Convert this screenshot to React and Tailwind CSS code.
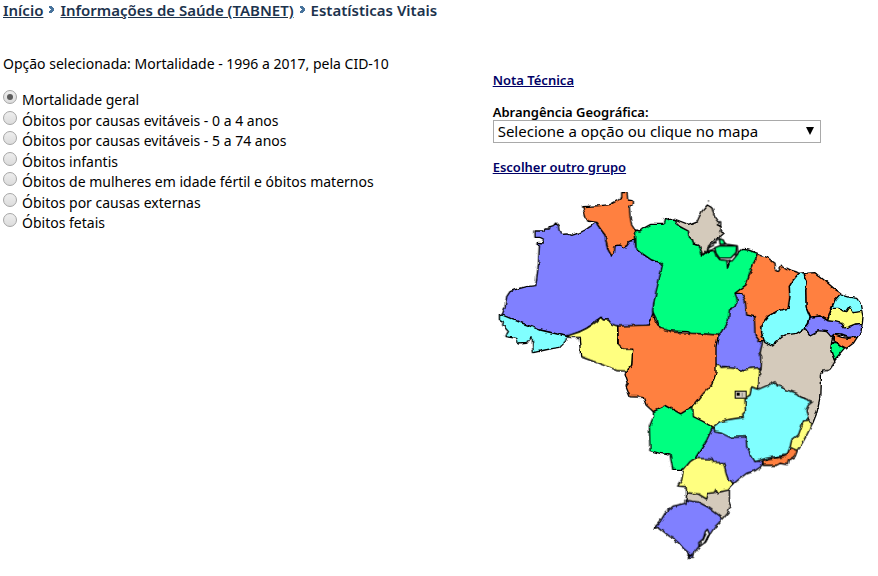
import { useState } from "react";

const GROUPS = [
  "Mortalidade geral",
  "Óbitos por causas evitáveis - 0 a 4 anos",
  "Óbitos por causas evitáveis - 5 a 74 anos",
  "Óbitos infantis",
  "Óbitos de mulheres em idade fértil e óbitos maternos",
  "Óbitos por causas externas",
  "Óbitos fetais",
];

const BLUE = "#8080ff";
const ORANGE = "#ff8040";
const GREEN = "#00ff80";
const SAND = "#d4cabb";
const YELLOW = "#ffff80";
const CYAN = "#80ffff";

// Each state is an outline relative to the origin of its region of the map.
// Earlier states reach under later ones, so a shared border is drawn once.
const NORTHWEST = [0, 0];
const NORTH = [390, 0];
const NORTHEAST = [705, 165];
const WEST = [210, 375];
const CENTER = [570, 465];
const SOUTH = [450, 735];

const STATES = [
  { id: "BA", fill: SAND, at: CENTER, points: "238,0 280,5 320,-30 375,-42 420,-38 460,-15 455,5 453,30 460,50 465,65 450,88 428,90 428,98 421,105 421,125 419,180 410,220 398,250 385,250 370,225 370,205 375,190 375,176 345,168 318,158 300,150 285,135 265,145 240,150 230,143 232,80" },
  { id: "TO", fill: BLUE, at: NORTHEAST, points: "28,150 60,150 75,180 75,215 100,225 100,285 114,303 108,325 105,340 110,350 108,390 85,400 70,392 55,395 40,387 10,388 0,380 -32,378 -35,330 -33,290 -18,275 -10,258 3,235 6,205 25,195 30,185 20,165" },
  { id: "AM", fill: BLUE, at: NORTHWEST, points: "135,138 160,138 165,132 178,132 180,125 190,122 197,114 205,122 207,135 213,148 235,147 245,151 270,143 285,135 300,125 318,112 330,130 345,150 352,190 365,213 375,182 390,180 400,188 410,182 420,168 436,165 438,190 460,208 485,225 512,232 517,240 510,290 500,320 490,365 488,390 482,420 440,424 380,424 365,420 355,405 338,405 333,398 320,405 305,420 290,430 270,440 235,455 150,435 90,412 36,390 45,365 50,335 60,320 75,314 90,310 110,305 137,302 140,280 145,240 148,180 141,178 142,172 158,174 160,162 150,157 135,157" },
  { id: "RR", fill: ORANGE, at: NORTHWEST, points: "278,65 330,62 360,59 385,45 395,38 395,23 411,23 413,45 427,47 427,60 418,64 420,95 425,120 436,137 436,165 420,168 410,182 400,188 390,180 375,182 373,205 365,213 355,195 348,170 345,150 330,130 318,112 290,108" },
  { id: "AC", fill: CYAN, at: NORTHWEST, points: "28,392 36,390 90,412 150,435 233,455 230,465 210,487 190,490 165,495 130,503 126,455 110,475 85,477 80,460 45,455 55,440 38,420 40,410 28,403" },
  { id: "PA", fill: GREEN, at: NORTH, points: "46,135 60,138 70,130 92,118 130,118 133,100 145,104 163,102 168,115 180,125 205,138 208,155 218,165 220,177 238,182 248,210 262,200 285,195 292,215 300,224 320,222 323,248 330,225 345,210 365,193 385,195 413,205 395,250 378,300 345,325 352,345 345,365 328,375 325,405 310,430 297,452 270,448 210,445 205,440 130,437 112,425 108,400 100,385 98,375 108,320 118,280 127,240 120,232 95,225 70,208 48,190" },
  { id: "AP", fill: SAND, at: NORTH, points: "163,102 205,118 232,108 245,80 262,60 275,68 285,95 298,112 292,120 303,125 303,140 312,145 300,155 285,165 270,178 262,195 248,210 238,182 220,177 218,165 208,155 205,138 180,125 168,115" },
  { id: "GO", fill: YELLOW, at: CENTER, points: "104,72 120,74 123,82 145,80 165,82 190,93 210,85 240,83 235,145 222,150 205,190 200,240 150,248 120,255 100,270 80,260 50,245 34,230 34,195 55,160 85,130 100,100" },
  { id: "SP", fill: BLUE, at: CENTER, points: "88,266 110,268 130,275 150,284 206,282 210,320 220,340 228,362 247,366 248,372 240,382 225,392 200,400 180,415 158,434 135,425 130,390 125,375 90,370 40,362 70,315" },
  { id: "MG", fill: CYAN, at: CENTER, points: "215,140 235,148 265,135 285,125 292,138 305,140 320,150 350,160 360,170 398,185 385,195 378,210 385,240 370,245 360,280 340,300 330,325 320,345 260,355 225,365 210,340 200,320 198,290 150,292 125,280 104,276 100,260 120,245 150,238 190,232 188,222 196,215 195,175 210,165" },
  { id: "ES", fill: YELLOW, at: CENTER, points: "370,243 388,240 396,252 380,285 365,312 350,332 330,322 335,300 355,285" },
  { id: "RJ", fill: ORANGE, at: CENTER, points: "330,322 352,332 345,350 325,362 322,374 300,370 290,376 250,376 248,362 285,355 320,348" },
  { id: "MA", fill: ORANGE, at: NORTHEAST, points: "98,42 130,55 150,70 152,92 160,95 170,78 190,88 215,96 222,100 205,120 193,140 195,170 190,205 160,212 130,228 112,250 110,280 120,305 105,305 90,285 88,230 65,225 60,180 50,160 30,160 63,135 80,85" },
  { id: "CE", fill: ORANGE, at: NORTHEAST, points: "237,100 270,98 300,122 330,148 350,160 330,180 320,200 308,240 285,228 258,232 250,215 243,200 242,150 247,125" },
  { id: "PI", fill: CYAN, at: NORTHEAST, points: "222,100 237,98 240,115 247,125 242,150 243,200 255,230 250,250 240,265 215,280 180,285 160,300 140,318 120,308 110,280 112,250 130,228 160,212 190,205 195,170 193,140 205,120" },
  { id: "PE", fill: BLUE, at: NORTHEAST, points: "255,232 285,228 308,242 345,245 360,262 390,252 412,248 408,275 398,290 370,292 350,285 330,283 318,290 305,275 280,272 255,285 240,265 252,250" },
  { id: "PB", fill: YELLOW, at: NORTHEAST, points: "320,205 340,205 350,212 365,215 375,200 385,218 410,212 414,230 412,250 390,252 360,264 350,250 330,245 308,242" },
  { id: "RN", fill: CYAN, at: NORTHEAST, points: "345,163 375,172 395,175 405,188 410,214 385,218 375,200 365,214 350,210 340,205 320,205 330,180" },
  { id: "AL", fill: ORANGE, at: NORTHEAST, points: "325,283 350,292 370,295 398,290 385,310 365,325 345,315 325,303" },
  { id: "SE", fill: GREEN, at: NORTHEAST, points: "320,308 335,308 358,325 345,340 328,360 322,345 317,330" },
  { id: "MT", fill: ORANGE, at: WEST, points: "173,48 240,46 268,45 275,20 280,10 285,30 300,55 340,66 475,75 468,110 468,190 455,225 430,250 410,275 398,290 362,312 318,287 280,305 258,285 250,262 210,260 198,230 205,220 195,190 215,165 218,118 190,118 175,105" },
  { id: "RO", fill: YELLOW, at: WEST, points: "20,78 60,65 80,55 95,45 110,35 122,22 130,30 145,30 155,42 173,48 173,100 190,118 218,118 215,165 200,183 170,182 130,165 62,140 58,82 30,82" },
  { id: "MS", fill: GREEN, at: WEST, points: "280,305 318,287 362,312 398,290 400,320 430,335 458,352 440,390 405,445 370,478 338,478 330,435 300,430 270,422 268,350 280,320" },
  { id: "SC", fill: SAND, at: SOUTH, points: "140,180 175,185 198,200 205,184 230,180 268,178 268,220 273,228 265,245 243,270 230,262 205,240 175,226 138,218" },
  { id: "PR", fill: YELLOW, at: SOUTH, points: "165,85 215,87 220,97 250,98 258,130 265,150 282,160 265,180 230,188 228,178 222,188 205,190 200,207 175,192 140,188 138,170 113,168 125,150 130,120 150,95" },
  { id: "RS", fill: BLUE, at: SOUTH, points: "135,210 175,216 205,232 240,258 240,275 225,290 205,320 180,345 165,365 160,385 145,385 150,372 130,355 115,338 100,325 90,320 75,308 55,292 40,296 60,275 75,250 100,228 135,220" },
];

function BrazilMap() {
  return (
    <svg viewBox="9 0 1119 1131" className="block w-[373px] max-w-full overflow-visible" role="img" aria-label="Mapa do Brasil">
      <defs>
        <filter id="coast" x="-2%" y="-2%" width="104%" height="104%">
          <feTurbulence type="fractalNoise" baseFrequency="0.05" numOctaves="2" seed="4" result="noise" />
          <feDisplacementMap in="SourceGraphic" in2="noise" scale="11" xChannelSelector="R" yChannelSelector="G" />
        </filter>
      </defs>
      <g filter="url(#coast)" stroke="#000" strokeWidth="4" strokeLinejoin="round">
        {STATES.map(({ id, fill, at, points }) => (
          <polygon key={id} points={points} fill={fill} transform={`translate(${at[0]} ${at[1]})`} />
        ))}
      </g>
      <g stroke="#000" strokeWidth="4" strokeLinejoin="round">
        <g transform="translate(390 0)">
          <path d="M262 196 272 178 298 160 320 178 352 182 354 206 336 228 300 224 284 198Z" fill="#fff" />
          <path d="M284 188 300 182 350 183 348 203 332 219 298 219 288 205Z" fill={GREEN} />
          <path d="M298 161 310 165 315 178 300 178Z" fill={GREEN} />
          <path d="M264 190 282 180M268 198 284 190M276 176 290 172M322 248 330 224M352 206 344 212" fill="none" />
          <path d="M264 48h3M294 110h8v12h-7" fill="none" />
        </g>
        <g transform="translate(450 735)">
          <path d="M202 298 208 312 198 335 178 350 176 338 190 326 196 304Z" fill="#fff" />
          <path d="M198 310 188 332M205 316 193 340M184 334 181 346M142 374 158 378M144 384 158 370" fill="none" />
        </g>
      </g>
      <g transform="translate(570 465)" fill="#d4cabb" stroke="#000" strokeWidth="4" shapeRendering="crispEdges">
        <rect x="166" y="154" width="33" height="21" />
        <rect x="173" y="160" width="5" height="6" fill="#000" />
        <path d="M187 158v12" stroke="#888" />
      </g>
    </svg>
  );
}

function Chevron() {
  return (
    <svg viewBox="0 0 5 7" className="mx-[6px] mb-1 inline-block h-[7px] w-[5px] align-middle" aria-hidden="true">
      <path d="M0 0h3v1h1v1h1v3H4v1H3v1H0V5h1V4h1V3H1V2H0z" fill="#48739c" />
    </svg>
  );
}

export default function App() {
  const [group, setGroup] = useState(GROUPS[0]);
  return (
    <div className="bg-white font-['Trebuchet_MS','Noto_Sans',sans-serif] text-[13px] leading-4 text-black">
      <nav className="px-[3px] text-[15px] font-semibold leading-5 text-[#1c334d]">
        <a href="#inicio" className="underline">Início</a>
        <Chevron />
        <a href="#tabnet" className="underline">Informações de Saúde (TABNET)</a>
        <Chevron />
        <span>Estatísticas Vitais</span>
      </nav>
      <main className="grid grid-cols-[56fr_44fr]">
        <section className="px-[3px] pt-9 text-[14px] leading-4">
          <p>Opção selecionada: Mortalidade - 1996 a 2017, pela CID-10</p>
          <div className="mt-[18px] flex h-[141px] flex-col justify-between">
            {GROUPS.map((name) => (
              <label key={name} className="flex h-[18px] items-start gap-[5px]">
                <input
                  type="radio"
                  name="grupo"
                  checked={group === name}
                  onChange={() => setGroup(name)}
                  className="grid size-[14px] shrink-0 appearance-none place-items-center rounded-full border border-[#a6a6a6] bg-linear-to-b from-[#eeeeee] to-[#dcdcdc] checked:before:size-[6px] checked:before:rounded-full checked:before:bg-[#5c5c5c] checked:before:content-['']"
                />
                <span className="pt-[2px]">{name}</span>
              </label>
            ))}
          </div>
        </section>
        <section className="pl-px pt-[52px]">
          <a href="#nota" className="block font-semibold text-[#000066] underline">Nota Técnica</a>
          <label htmlFor="local" className="mt-4 block font-semibold">Abrangência Geográfica:</label>
          <div className="relative w-[328px] max-w-full">
            <select id="local" className="block h-[23px] w-full appearance-none border border-[#a9a9a9] bg-white pb-[2px] pl-1 text-[15px] leading-[20px]">
              <option>Selecione a opção ou clique no mapa</option>
            </select>
            <svg viewBox="0 0 8 8" className="pointer-events-none absolute right-[7px] top-[7px] size-2" aria-hidden="true">
              <path d="M0 0h8L4 8z" />
            </svg>
          </div>
          <a href="#grupo" className="mt-4 block font-semibold text-[#000066] underline">Escolher outro grupo</a>
          <div className="mt-[10px]">
            <BrazilMap />
          </div>
        </section>
      </main>
    </div>
  );
}
